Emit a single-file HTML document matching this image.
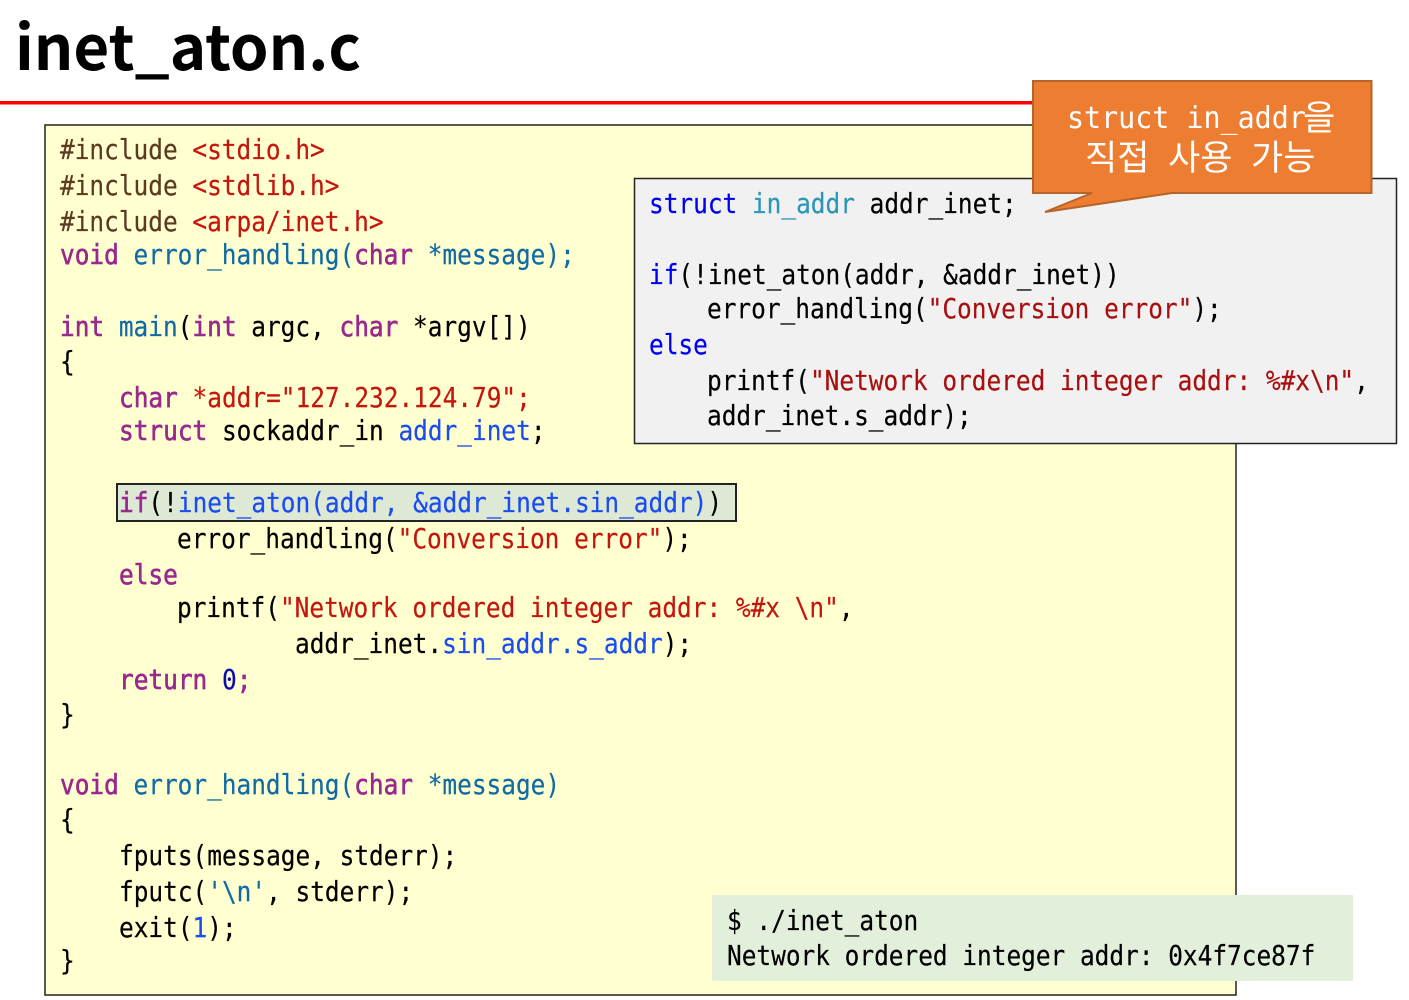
<!DOCTYPE html>
<html lang="ko">
<head>
<meta charset="utf-8">
<title>inet_aton.c</title>
<style>
html,body{margin:0;padding:0;background:#fff;width:1409px;height:1000px;overflow:hidden}
svg{display:block}
text{white-space:pre}
.c{font-family:"DejaVu Sans Mono","Liberation Mono",monospace;font-size:28px;fill:#000;stroke:#000;stroke-width:.2px}
.t{font-family:"Noto Sans CJK KR","Liberation Sans",sans-serif;font-weight:bold;font-size:62px;fill:#000}
.k{font-family:"DejaVu Sans Mono","Noto Sans CJK KR",monospace;font-size:30px;fill:#fff}
.h{font-family:"Noto Sans CJK KR","NanumGothic",sans-serif;font-size:35px;fill:#fff}
.pp{fill:#5c3a21;stroke:#5c3a21}.s{fill:#c4160f;stroke:#c4160f}.kw{fill:#99288f;stroke:#99288f;stroke-width:.6px}.f{fill:#0f6aa5;stroke:#0f6aa5}.b{fill:#1a4cf0;stroke:#1a4cf0}.n{fill:#0a0ab0;stroke:#0a0ab0}
.bk{fill:#0000f0;stroke:#0000f0}.ty{fill:#2a96b8;stroke:#2a96b8}.rs{fill:#a80f0f;stroke:#a80f0f}
</style>
</head>
<body>
<svg width="1409" height="1000" viewBox="0 0 1409 1000" xmlns="http://www.w3.org/2000/svg">
<text class="t" x="15" y="70" textLength="346" lengthAdjust="spacingAndGlyphs">inet_aton.c</text>
<rect x="0" y="101" width="1040" height="3.5" fill="#ff0000"/>
<rect x="45" y="125" width="1191" height="870" fill="#ffffd0" stroke="#222" stroke-width="1.5"/>
<rect x="117" y="484" width="619" height="37" fill="#dde8d5" stroke="#222" stroke-width="2"/>

<g class="c">
<text transform="translate(60,159) scale(.873,1)"><tspan class="pp">#include </tspan><tspan class="s">&lt;stdio.h&gt;</tspan></text>
<text transform="translate(60,195) scale(.873,1)"><tspan class="pp">#include </tspan><tspan class="s">&lt;stdlib.h&gt;</tspan></text>
<text transform="translate(60,231) scale(.873,1)"><tspan class="pp">#include </tspan><tspan class="s">&lt;arpa/inet.h&gt;</tspan></text>
<text transform="translate(60,264) scale(.873,1)"><tspan class="kw">void</tspan><tspan class="f"> error_handling(</tspan><tspan class="kw">char</tspan><tspan class="f"> *message);</tspan></text>
<text transform="translate(60,336) scale(.873,1)"><tspan class="kw">int</tspan><tspan class="f"> main</tspan>(<tspan class="kw">int</tspan> argc, <tspan class="kw">char</tspan> *argv[])</text>
<text transform="translate(60,371) scale(.873,1)">{</text>
<text transform="translate(119,407) scale(.873,1)"><tspan class="kw">char</tspan><tspan class="s"> *addr="127.232.124.79";</tspan></text>
<text transform="translate(119,440) scale(.873,1)"><tspan class="kw">struct</tspan> sockaddr_in <tspan class="b">addr_inet</tspan>;</text>
<text transform="translate(119,512) scale(.873,1)"><tspan class="kw">if</tspan>(!<tspan class="b">inet_aton(addr, &amp;addr_inet.sin_addr)</tspan>)</text>
<text transform="translate(177,548) scale(.873,1)">error_handling(<tspan class="s">"Conversion error"</tspan>);</text>
<text transform="translate(119,584) scale(.873,1)"><tspan class="kw">else</tspan></text>
<text transform="translate(177,617) scale(.873,1)">printf(<tspan class="s">"Network ordered integer addr: %#x \n"</tspan>,</text>
<text transform="translate(295,653) scale(.873,1)">addr_inet.<tspan class="b">sin_addr.s_addr</tspan>);</text>
<text transform="translate(119,689) scale(.873,1)"><tspan class="kw">return</tspan> <tspan class="n">0</tspan><tspan class="kw">;</tspan></text>
<text transform="translate(60,724) scale(.873,1)">}</text>
<text transform="translate(60,794) scale(.873,1)"><tspan class="kw">void</tspan><tspan class="f"> error_handling(</tspan><tspan class="kw">char</tspan><tspan class="f"> *message)</tspan></text>
<text transform="translate(60,829) scale(.873,1)">{</text>
<text transform="translate(119,865) scale(.873,1)">fputs(message, stderr);</text>
<text transform="translate(119,901) scale(.873,1)">fputc(<tspan class="f">'\n'</tspan>, stderr);</text>
<text transform="translate(119,937) scale(.873,1)">exit(<tspan class="b">1</tspan>);</text>
<text transform="translate(60,970) scale(.873,1)">}</text>
</g>

<rect x="634.5" y="178.5" width="762" height="265" fill="#f1f1f1" stroke="#222" stroke-width="1.5"/>
<g class="c">
<text transform="translate(649,213) scale(.873,1)"><tspan class="bk">struct</tspan> <tspan class="ty">in_addr</tspan> addr_inet;</text>
<text transform="translate(649,284) scale(.873,1)"><tspan class="bk">if</tspan>(!inet_aton(addr, &amp;addr_inet))</text>
<text transform="translate(707,318) scale(.873,1)">error_handling(<tspan class="rs">"Conversion error"</tspan>);</text>
<text transform="translate(649,354) scale(.873,1)"><tspan class="bk">else</tspan></text>
<text transform="translate(707,390) scale(.873,1)">printf(<tspan class="rs">"Network ordered integer addr: %#x\n"</tspan>,</text>
<text transform="translate(707,425) scale(.873,1)">addr_inet.s_addr);</text>
</g>

<polygon points="1033,81 1371.5,81 1371.5,193 1172,193 1045,212 1092,193 1033,193" fill="#ed7d31" stroke="#b5652a" stroke-width="2"/>
<text class="k" transform="translate(1067,128) scale(.945,1)">struct in_addr</text>
<text class="h" x="1303" y="130">을</text>
<text class="h" x="1085" y="170">직접</text>
<text class="h" x="1168" y="170">사용</text>
<text class="h" x="1251" y="170">가능</text>

<rect x="712" y="895" width="641" height="86" fill="#e2efda"/>
<g class="c">
<text transform="translate(727,930) scale(.873,1)">$ ./inet_aton</text>
<text transform="translate(727,965) scale(.873,1)">Network ordered integer addr: 0x4f7ce87f</text>
</g>
</svg>
</body>
</html>
